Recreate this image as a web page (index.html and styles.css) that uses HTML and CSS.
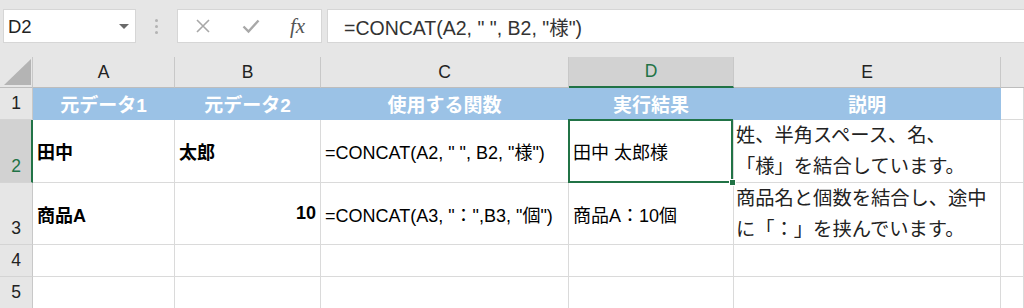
FILE: index.html
```html
<!DOCTYPE html>
<html lang="ja">
<head>
<meta charset="utf-8">
<title>CONCAT</title>
<link rel="stylesheet" href="styles.css">
</head>
<body>
<div class="toolbar">
  <div class="namebox">
    <span class="name">D2</span>
    <span class="dropdown"></span>
  </div>
  <div class="grip"><span></span><span></span><span></span></div>
  <div class="fxbox">
    <svg class="ico" width="16" height="16" viewBox="0 0 16 16"><path d="M2 2 L14 14 M14 2 L2 14" stroke="#a8a8a8" stroke-width="1.6" fill="none"/></svg>
    <svg class="ico" width="18" height="16" viewBox="0 0 18 16"><path d="M1.5 8.5 L6.5 13.5 L16.5 2.5" stroke="#a8a8a8" stroke-width="2.4" fill="none"/></svg>
    <span class="fx">fx</span>
  </div>
  <div class="formula">=CONCAT(A2, " ", B2, "様")</div>
</div>

<div class="sheet">
  <div class="corner"><span class="tri"></span></div>
  <div class="colhead">A</div>
  <div class="colhead">B</div>
  <div class="colhead">C</div>
  <div class="colhead sel">D</div>
  <div class="colhead">E</div>
  <div class="colhead last"></div>

  <div class="rowhead">1</div>
  <div class="cell hdr">元データ1</div>
  <div class="cell hdr">元データ2</div>
  <div class="cell hdr">使用する関数</div>
  <div class="cell hdr">実行結果</div>
  <div class="cell hdr">説明</div>
  <div class="cell"></div>

  <div class="rowhead sel">2</div>
  <div class="cell bold">田中</div>
  <div class="cell bold">太郎</div>
  <div class="cell">=CONCAT(A2, " ", B2, "様")</div>
  <div class="cell active">田中 太郎様<span class="handle"></span></div>
  <div class="cell wrap">姓、半角スペース、名、<br>「様」を結合しています。</div>
  <div class="cell"></div>

  <div class="rowhead">3</div>
  <div class="cell bold">商品A</div>
  <div class="cell bold num">10</div>
  <div class="cell">=CONCAT(A3, "：",B3, "個")</div>
  <div class="cell">商品A：10個</div>
  <div class="cell wrap">商品名と個数を結合し、途中<br>に「：」を挟んでいます。</div>
  <div class="cell"></div>

  <div class="rowhead">4</div>
  <div class="cell"></div><div class="cell"></div><div class="cell"></div><div class="cell"></div><div class="cell"></div><div class="cell"></div>

  <div class="rowhead">5</div>
  <div class="cell"></div><div class="cell"></div><div class="cell"></div><div class="cell"></div><div class="cell"></div><div class="cell"></div>
</div>
</body>
</html>
```
FILE: styles.css
```css
* { box-sizing: border-box; }
html, body {
  margin: 0;
  padding: 0;
}
body {
  width: 1024px;
  height: 308px;
  overflow: hidden;
  background: #e6e6e6;
  font-family: "Liberation Sans", "Noto Sans CJK JP", sans-serif;
  color: #000;
}

.toolbar {
  display: flex;
  align-items: center;
  height: 57px;
  padding: 9px 0 14px 3px;
}
.namebox {
  width: 133px;
  height: 34px;
  background: #fff;
  border: 1px solid #d6d6d6;
  display: flex;
  align-items: center;
  justify-content: space-between;
  padding: 2px 6px 0 4px;
}
.name {
  font-size: 18.5px;
  color: #222;
}
.dropdown {
  width: 0;
  height: 0;
  margin-bottom: 2px;
  border-left: 5px solid transparent;
  border-right: 5px solid transparent;
  border-top: 5px solid #6a6a6a;
}
.grip {
  width: 41px;
  display: flex;
  flex-direction: column;
  align-items: center;
  gap: 3px;
}
.grip span {
  width: 3px;
  height: 3px;
  border-radius: 50%;
  background: #b3b3b3;
}
.fxbox {
  width: 145px;
  height: 34px;
  background: #fff;
  border: 1px solid #d6d6d6;
  display: flex;
  align-items: center;
  padding: 0 0 0 17px;
  gap: 0;
}
.fxbox .ico:first-child { margin-right: 31px; }
.fxbox .ico:nth-child(2) { margin-right: 30px; }
.fx {
  font-family: "Liberation Serif", "DejaVu Serif", serif;
  font-style: italic;
  font-size: 21px;
  color: #555;
  line-height: 1;
}
.formula {
  flex: 1;
  margin-left: 5px;
  height: 34px;
  background: #fff;
  border: 1px solid #d6d6d6;
  border-right: none;
  padding-left: 16px;
  display: flex;
  align-items: center;
  font-size: 19.5px;
  color: #333;
  white-space: nowrap;
}

.sheet {
  display: grid;
  grid-template-columns: 33px 142px 146px 248px 165px 267px 1fr;
  grid-template-rows: 31px 32px 63px 62px 32px 32px;
  background: #fff;
}
.corner {
  background: #e6e6e6;
  border-right: 1px solid #c8c8c8;
  border-bottom: 1px solid #bdbdbd;
  position: relative;
}
.tri {
  position: absolute;
  right: 1px;
  bottom: 2px;
  width: 0;
  height: 0;
  border-left: 27px solid transparent;
  border-bottom: 26px solid #b4b4b4;
}
.colhead {
  background: #e6e6e6;
  border-right: 1px solid #c8c8c8;
  border-bottom: 1px solid #bdbdbd;
  display: flex;
  align-items: center;
  justify-content: center;
  font-size: 17.5px;
  color: #222;
}
.colhead.sel {
  background: #d2d2d2;
  color: #217346;
  border-bottom: 2px solid #217346;
}
.colhead.last { border-right: none; }

.rowhead {
  background: #e6e6e6;
  border-right: 1px solid #c8c8c8;
  border-bottom: 1px solid #d4d4d4;
  display: flex;
  align-items: flex-end;
  justify-content: center;
  padding-bottom: 5px;
  font-size: 17.5px;
  line-height: 22px;
  color: #222;
}
.rowhead.sel {
  background: #d2d2d2;
  color: #217346;
  border-right: 2px solid #217346;
  padding-left: 1px;
}

.cell {
  border-right: 1px solid #dadada;
  border-bottom: 1px solid #dadada;
  display: flex;
  align-items: center;
  padding: 0 4px 0 4px;
  font-size: 18px;
  white-space: nowrap;
  position: relative;
}
.cell.hdr {
  background: #9bc2e6;
  border-right-color: #9bc2e6;
  border-bottom-color: #9bc2e6;
  color: #fff;
  font-weight: bold;
  justify-content: center;
  font-size: 19px;
}
.cell.bold { font-weight: bold; }
.cell.num { justify-content: flex-end; }
.cell.wrap {
  align-items: flex-start;
  font-size: 19.3px;
  line-height: 31px;
  padding: 0 0 0 2px;
  color: #222;
}
.cell.active::after {
  content: "";
  position: absolute;
  top: -1px;
  left: -1px;
  right: 0;
  bottom: -1px;
  border: 2px solid #217346;
  pointer-events: none;
}
.handle {
  position: absolute;
  right: -3px;
  bottom: -4px;
  width: 7px;
  height: 7px;
  background: #217346;
  border: 1px solid #fff;
  z-index: 2;
}
```
